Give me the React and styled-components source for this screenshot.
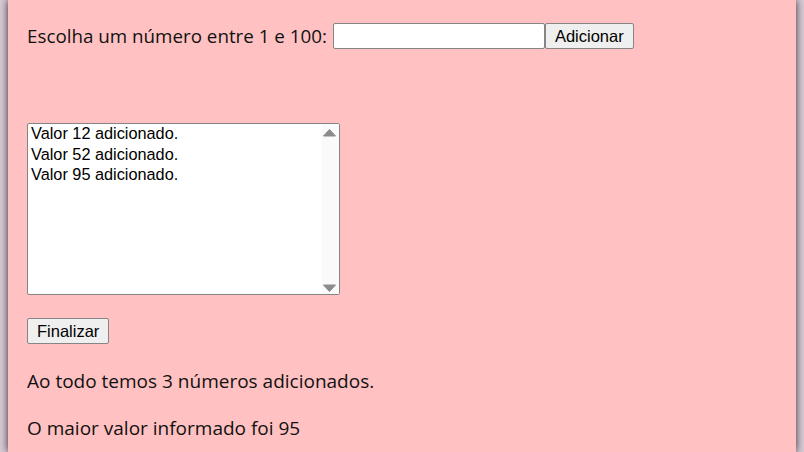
import styled, { createGlobalStyle } from "styled-components";

const GlobalStyle = createGlobalStyle`
   html, body {
      margin: 0;
      padding: 0;
      background: #d9ccd6;
   }
`;

const Page = styled.main`
   margin: 0 8px;
   min-height: 100vh;
   box-sizing: border-box;
   padding: 23px 19px 0;
   background: #ffc1c1;
   box-shadow: 0 0 8px rgba(30, 15, 30, 0.9);
   font-family: "Open Sans", "Liberation Sans", sans-serif;
   font-size: 18.8px;
   color: #111;
   display: flex;
   flex-direction: column;
   align-items: flex-start;
`;

const Row = styled.div`
   display: flex;
   align-items: center;
   height: 26px;
`;

const Label = styled.label`
   margin-right: 6px;
`;

const NumberInput = styled.input`
   box-sizing: border-box;
   width: 212px;
   height: 26px;
   border: 1px solid #858585;
   border-radius: 2px;
   background: #fff;
   padding: 1px 2px;
   font: 16px "Liberation Sans", Arial, sans-serif;
   &::-webkit-inner-spin-button { display: none; }
`;

const Button = styled.button`
   box-sizing: border-box;
   height: 26px;
   padding: 0 9px;
   border: 1px solid #858585;
   border-radius: 2px;
   background: #efefef;
   color: #000;
   font: 16.5px "Liberation Sans", Arial, sans-serif;
   margin-top: ${(p) => p.$top || 0}px;
`;

const ListBox = styled.div`
   box-sizing: border-box;
   display: flex;
   width: 313px;
   height: 172px;
   margin-top: 74px;
   border: 1px solid #858585;
   border-radius: 2px;
   background: #fff;
   overflow: hidden;
`;

const List = styled.select`
   flex: 1;
   min-width: 0;
   height: 100%;
   border: none;
   background: transparent;
   overflow: hidden;
   padding: 0;
   margin: 0;
   font: 16.3px "Liberation Sans", Arial, sans-serif;
   color: #000;
   outline: none;

   option {
      padding: 0 3px 1px;
      line-height: 20px;
   }
`;

const ScrollTrack = styled.div`
   width: 17px;
   background: #fafafa;
   display: flex;
   flex-direction: column;
   justify-content: space-between;
`;

const ScrollArrow = styled.svg`
   width: 17px;
   height: 17px;
   display: block;
`;

const Arrow = ({ down }) => (
   <ScrollArrow viewBox="0 0 17 17">
      <path
         d={down ? "M1.5 8 L7.5 14.5 L13.5 8 Z" : "M1.5 12 L7.5 5.5 L13.5 12 Z"}
         fill="#8c8c8c"
         stroke="#8c8c8c"
         strokeWidth="1"
         strokeLinejoin="round"
      />
   </ScrollArrow>
);

const Result = styled.p`
   margin: ${(p) => p.$top}px 0 0;
   font-size: 19px;
   line-height: 26px;
`;

const values = [12, 52, 95];

export default function App() {
   return (
      <>
         <GlobalStyle />
         <Page>
            <Row>
               <Label htmlFor="num">Escolha um número entre 1 e 100:</Label>
               <NumberInput id="num" type="number" />
               <Button>Adicionar</Button>
            </Row>
            <ListBox>
               <List size={8}>
                  {values.map((v) => (
                     <option key={v}>Valor {v} adicionado.</option>
                  ))}
               </List>
               <ScrollTrack>
                  <Arrow />
                  <Arrow down />
               </ScrollTrack>
            </ListBox>
            <Button $top={23}>Finalizar</Button>
            <Result $top={24}>Ao todo temos {values.length} números adicionados.</Result>
            <Result $top={21}>O maior valor informado foi {Math.max(...values)}</Result>
         </Page>
      </>
   );
}
